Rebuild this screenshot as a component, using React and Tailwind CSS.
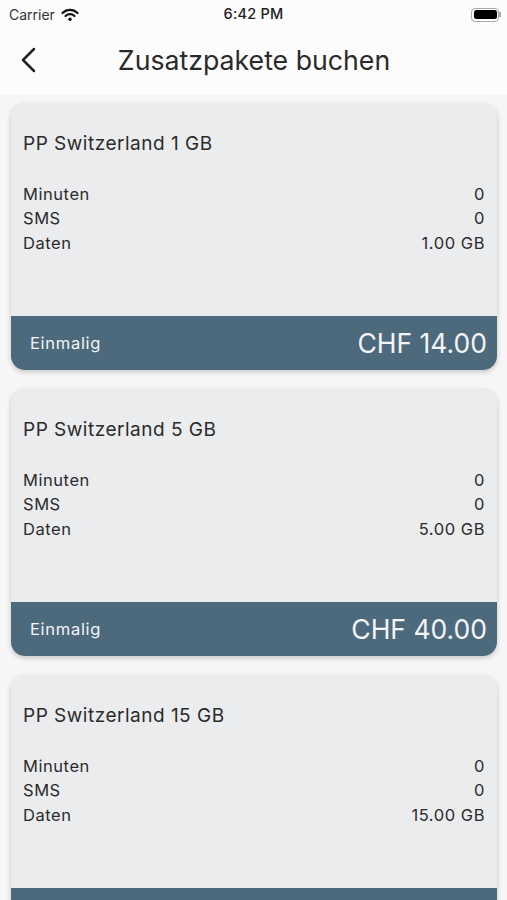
const packages = [
  { name: 'PP Switzerland 1 GB', data: '1.00 GB', billing: 'Einmalig', price: 'CHF 14.00' },
  { name: 'PP Switzerland 5 GB', data: '5.00 GB', billing: 'Einmalig', price: 'CHF 40.00' },
  { name: 'PP Switzerland 15 GB', data: '15.00 GB' },
]

function StatusBar() {
  return (
    <div className="h-[28px] flex items-center justify-between pl-[9px] pr-[6px] pt-[1px]">
      <div className="flex items-center gap-[6px] w-[120px]">
        <span className="text-[14px] leading-none text-[#333]">Carrier</span>
        <svg width="18" height="14" viewBox="0 0 18 14" fill="none" stroke="#111" strokeLinecap="round">
          <path d="M1.5 5 C5.8 .8 12.2 .8 16.5 5" strokeWidth="2.2" />
          <path d="M4.5 8 C7 5.6 11 5.6 13.5 8" strokeWidth="2.2" />
          <circle cx="9" cy="11.3" r="1.7" fill="#111" stroke="none" />
        </svg>
      </div>
      <span className="text-[14.5px] leading-none font-medium tracking-[0.2px] text-[#222] -ml-[3px]">6:42 PM</span>
      <div className="w-[120px] flex justify-end">
        <div className="flex items-center">
          <div className="w-[28px] h-[14px] rounded-[4px] border border-[#aaa] p-[1.5px]">
            <div className="w-full h-full rounded-[2.5px] bg-black"></div>
          </div>
          <div className="w-[1.5px] h-[5px] bg-[#aaa]"></div>
        </div>
      </div>
    </div>
  )
}

function PackageCard({ item }) {
  return (
    <div className="h-[267px] rounded-[14px] bg-[#ebecee] shadow-[0_2px_5px_rgba(0,0,0,0.2)] overflow-hidden flex flex-col shrink-0">
      <div className="flex-1 pl-[12px] pr-[12px]">
        <div className="text-[19px] leading-[24px] tracking-[0.5px] text-[#2b2b2b] pt-[29px]">{item.name}</div>
        <div className="mt-[26px] text-[16.5px] leading-[24.4px] tracking-[0.55px] text-[#2b2b2b]">
          <div className="flex justify-between"><span>Minuten</span><span>0</span></div>
          <div className="flex justify-between"><span>SMS</span><span>0</span></div>
          <div className="flex justify-between"><span>Daten</span><span>{item.data}</span></div>
        </div>
      </div>
      <div className="h-[54px] bg-[#4d6a7d] flex items-center justify-between pl-[19px] pr-[10px] pt-[1px] text-[#f2f4f5]">
        <span className="text-[16.5px] tracking-[0.7px]">{item.billing}</span>
        <span className="text-[26.5px]">{item.price}</span>
      </div>
    </div>
  )
}

export default function App() {
  return (
    <div className="h-[900px] overflow-hidden bg-[#f6f6f7] font-['Inter',sans-serif]">
      <div className="bg-[#fcfcfc] h-[95px]">
        <StatusBar />
        <div className="relative h-[67px] flex items-center justify-center">
          <svg className="absolute left-[20px] top-[19px]" width="16" height="26" viewBox="0 0 16 26" fill="none" stroke="#222" strokeWidth="2.5" strokeLinecap="round" strokeLinejoin="round">
            <path d="M14 2 L3 13 L14 24" />
          </svg>
          <h1 className="text-[26.7px] text-[#2a2a2a] pb-[2px] ml-[1px]">Zusatzpakete buchen</h1>
        </div>
      </div>
      <div className="flex flex-col gap-[19px] pt-[8px] px-[11px] pr-[10px]">
        {packages.map((item) => <PackageCard key={item.name} item={item} />)}
      </div>
    </div>
  )
}
